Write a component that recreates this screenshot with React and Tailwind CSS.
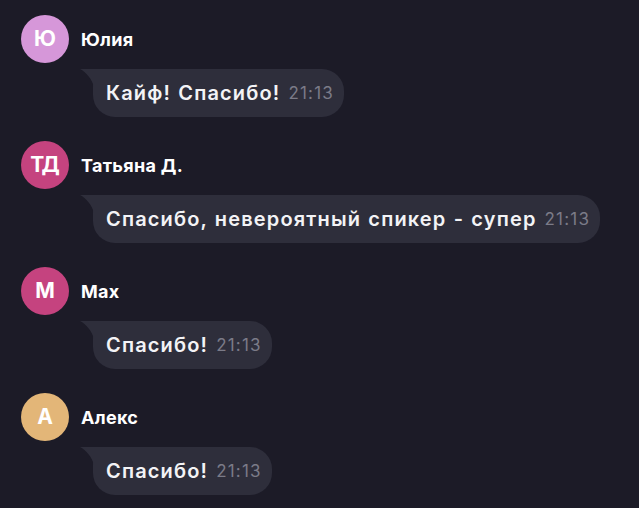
import React from "react";

const messages = [
  { initials: "Ю", name: "Юлия", color: "bg-[#d697d9]", text: "Кайф! Спасибо!", time: "21:13" },
  { initials: "ТД", name: "Татьяна Д.", color: "bg-[#c5437f]", text: "Спасибо, невероятный спикер - супер", time: "21:13" },
  { initials: "М", name: "Max", color: "bg-[#c5437f]", text: "Спасибо!", time: "21:13" },
  { initials: "А", name: "Алекс", color: "bg-[#e3b678]", text: "Спасибо!", time: "21:13" },
];

function Message({ m }) {
  return (
    <div className="flex flex-col">
      <div className="flex items-center gap-3 h-12">
        <div className={`w-12 h-12 rounded-full ${m.color} flex items-center justify-center text-white text-[21px] font-bold`}>
          {m.initials}
        </div>
        <span className="text-white text-[18px] font-bold tracking-[0.3px]">{m.name}</span>
      </div>
      <div className="mt-[6px] ml-[72px] relative self-start">
        {/* bubble tail */}
        <svg className="absolute -left-[13px] top-0" width="14" height="18" viewBox="0 0 14 18">
          <path d="M0 0 H14 V18 C12 10 6 3 0 0 Z" fill="#2e2e3b" />
        </svg>
        <div className="h-12 flex items-center bg-[#2e2e3b] rounded-[22px] rounded-tl-none pl-[13px] pr-[10px] gap-2">
          <span className="text-[#f3f3f6] text-[20px] font-semibold tracking-[1.15px] [word-spacing:1px]">{m.text}</span>
          <span className="text-[#7b7b88] text-[17px] tracking-[1.2px] pt-[2px]">{m.time}</span>
        </div>
      </div>
    </div>
  );
}

export default function App() {
  return (
    <div
      className="w-[639px] h-[508px] bg-[#1c1b27] pl-[21px] pt-[15px] flex flex-col gap-6 overflow-hidden"
      style={{ fontFamily: "Inter, 'Noto Sans', sans-serif" }}
    >
      {messages.map((m) => (
        <Message key={m.name} m={m} />
      ))}
    </div>
  );
}
